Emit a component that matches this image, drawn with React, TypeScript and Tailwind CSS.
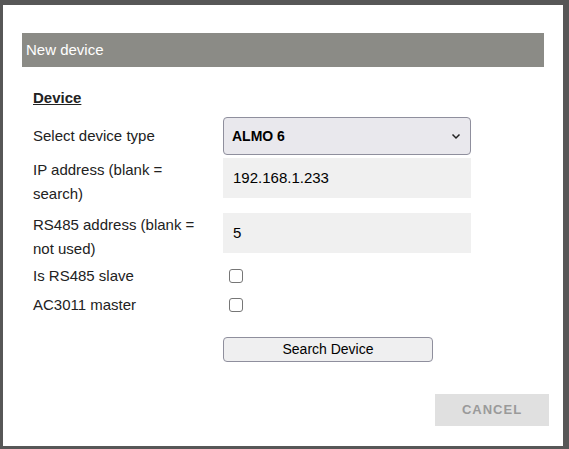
export default function App() {
  const f = { fontFamily: '"Liberation Sans", Arial, sans-serif' };
  return (
    <div className="w-[569px] h-[449px] bg-[#575757] pt-[5px] pl-[3px] pr-[6px] pb-[3px]" style={f}>
      <div className="w-full h-full bg-white pt-[28px] px-[19px]">
        <div className="h-[34px] bg-[#8b8b86] text-white text-[15px] flex items-center pl-[4px]">New device</div>
        <div className="pl-[11px] pt-[22px] text-[15px] text-[#222]">
          <div className="font-bold underline leading-[18px] mb-[10px]">Device</div>
          <div className="flex items-center h-[38px]">
            <div className="w-[190px]">Select device type</div>
            <div className="w-[248px] h-[38px] bg-[#e9e8ed] border border-[#8f8f9d] rounded-[4px] flex items-center justify-between px-[8px]">
              <span className="font-bold text-[14px] text-black">ALMO 6</span>
              <svg width="12" height="12" viewBox="0 0 12 12"><path d="M2.5 4.5 6 8l3.5-3.5" fill="none" stroke="#222" strokeWidth="1.5" /></svg>
            </div>
          </div>
          <div className="flex items-start mt-[3px] h-[40px]">
            <div className="w-[190px] leading-[24px] pt-[-0px]">IP address (blank =<br />search)</div>
            <div className="w-[248px] h-[40px] bg-[#f0f0f0] flex items-center px-[10px] text-black">192.168.1.233</div>
          </div>
          <div className="flex items-start mt-[15px] h-[40px]">
            <div className="w-[190px] leading-[24px]">RS485 address (blank =<br />not used)</div>
            <div className="w-[248px] h-[40px] bg-[#f0f0f0] flex items-center px-[10px] text-black">5</div>
          </div>
          <div className="flex items-center mt-[9px] h-[28px]">
            <div className="w-[196px]">Is RS485 slave</div>
            <div className="w-[14px] h-[14px] border border-[#767676] rounded-[3px]" />
          </div>
          <div className="flex items-center h-[30px]">
            <div className="w-[196px]">AC3011 master</div>
            <div className="w-[14px] h-[14px] border border-[#767676] rounded-[3px]" />
          </div>
          <div className="pl-[190px] mt-[17px]">
            <div className="w-[210px] h-[25px] bg-[#efeff0] border border-[#8f8f9d] rounded-[4px] flex items-center justify-center text-[14px] text-black">Search Device</div>
          </div>
          <div className="flex justify-end mt-[32px]">
            <div className="w-[114px] h-[32px] bg-[#e0e0e0] mr-[-5px] flex items-center justify-center text-[13px] font-bold tracking-[1px] text-[#9a9a9a]">CANCEL</div>
          </div>
        </div>
      </div>
    </div>
  );
}
